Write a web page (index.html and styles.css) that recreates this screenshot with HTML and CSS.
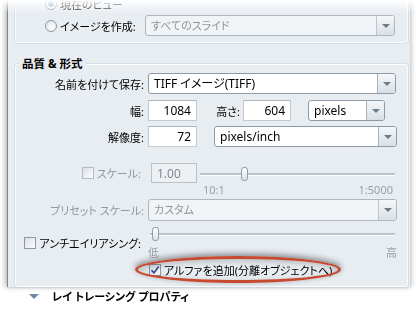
FILE: index.html
```html
<!DOCTYPE html>
<html lang="ja">

<head>
   <meta charset="UTF-8">
   <meta name="viewport" content="width=device-width, initial-scale=1.0">
   <link rel="stylesheet" href="styles.css">
   <title>品質 &amp; 形式</title>
</head>

<body>
   <div class="frame">
      <div class="panel">

         <!-- output group, its top is scrolled out of view -->
         <div class="group group-output">
            <div class="opt-row">
               <span class="radio radio-on"></span>
               <span class="opt-label">現在のビュー</span>
            </div>
            <div class="opt-row opt-row-create">
               <span class="radio"></span>
               <span class="opt-label">イメージを作成:</span>
               <div class="combo combo-off combo-slides">
                  <span class="combo-value">すべてのスライド</span>
                  <span class="drop"></span>
               </div>
            </div>
         </div>

         <div class="group group-quality">
            <div class="group-title">品質 &amp; 形式</div>

            <div class="row row-save">
               <label class="row-label">名前を付けて保存:</label>
               <div class="combo combo-save">
                  <span class="combo-value latin">TIFF イメージ(TIFF)</span>
                  <span class="drop"></span>
               </div>
            </div>

            <div class="row row-size">
               <label class="row-label">幅:</label>
               <div class="cell">
                  <span class="num num-w">1084</span>
                  <span class="inline-label">高さ:</span>
                  <span class="num num-h">604</span>
                  <div class="combo combo-unit">
                     <span class="combo-value latin">pixels</span>
                     <span class="drop"></span>
                  </div>
               </div>
            </div>

            <div class="row row-res">
               <label class="row-label">解像度:</label>
               <div class="cell">
                  <span class="num num-w">72</span>
                  <div class="combo combo-resunit">
                     <span class="combo-value latin">pixels/inch</span>
                     <span class="drop"></span>
                  </div>
               </div>
            </div>

            <div class="row row-scale">
               <div class="row-check is-off">
                  <span class="check"></span>
                  <span>スケール:</span>
               </div>
               <div class="cell">
                  <span class="num num-off">1.00</span>
                  <div class="slider slider-scale">
                     <span class="thumb"></span>
                  </div>
               </div>
            </div>
            <div class="row row-ticks">
               <span></span>
               <div class="ticks ticks-scale">
                  <span>10:1</span>
                  <span>1:5000</span>
               </div>
            </div>

            <div class="row row-preset">
               <label class="row-label is-off">プリセット スケール:</label>
               <div class="combo combo-off combo-preset">
                  <span class="combo-value">カスタム</span>
                  <span class="drop"></span>
               </div>
            </div>

            <div class="row row-aa">
               <div class="row-check">
                  <span class="check"></span>
                  <span>アンチエイリアシング:</span>
               </div>
               <div class="cell-stack">
                  <div class="slider slider-aa">
                     <span class="thumb"></span>
                  </div>
                  <div class="ticks ticks-aa">
                     <span>低</span>
                     <span>高</span>
                  </div>
               </div>
            </div>

            <div class="row row-alpha">
               <span></span>
               <div class="alpha">
                  <span class="check check-on">
                     <svg width="10" height="10" viewBox="0 0 10 10">
                        <path d="M1.5 5.2 L4 7.8 L8.8 1.6" fill="none" stroke="#2f3f9e" stroke-width="1.6"/>
                     </svg>
                  </span>
                  <span>アルファを追加(分離オブジェクトへ)</span>
                  <span class="highlight"></span>
               </div>
            </div>
         </div>

         <div class="section-head">
            <span class="twisty"></span>
            <span>レイ トレーシング プロパティ</span>
         </div>

      </div>
   </div>
</body>

</html>
```

FILE: styles.css
```css
* {
   padding: 0;
   margin: 0;
   box-sizing: border-box;
}

body {
   font-family: "Noto Sans", "Noto Sans CJK JP", sans-serif;
   font-size: 11px;
   font-feature-settings: "palt";
   color: #000;
   background-color: #fff;
}

.latin {
   font-size: 12px;
}

.frame {
   width: 418px;
   height: 317px;
   overflow: hidden;
   -webkit-mask-image: linear-gradient(to bottom, transparent 0, #000 13px, #000 303px, transparent 313px);
   mask-image: linear-gradient(to bottom, transparent 0, #000 13px, #000 303px, transparent 313px);
}

.panel {
   margin-left: 7px;
   width: 404px;
   height: 317px;
   background-color: #e8edf2;
   border-left: 1px solid #7d8790;
   border-right: 1px solid #d3d9de;
   box-shadow: -2px 0 5px rgba(0, 0, 0, 0.28), 2px 0 4px rgba(0, 0, 0, 0.1);
}

/* group boxes */
.group {
   position: relative;
   width: 393px;
   margin-left: 7px;
   border: 1px solid #fbfcfd;
   border-radius: 3px;
   box-shadow: 0 0 0 1px rgba(196, 205, 214, 0.45);
}

.group-output {
   margin-top: -30px;
   padding: 22px 0 6px;
}

.group-quality {
   margin-top: 21px;
   padding: 8px 0 10px;
}

.group-title {
   position: absolute;
   top: -9px;
   left: 3px;
   padding: 0 3px;
   font-size: 11.5px;
   font-weight: bold;
   line-height: 16px;
   background-color: #e8edf2;
}

.opt-row {
   display: flex;
   align-items: center;
   height: 21px;
}

.opt-row-create {
   margin-top: 1px;
}

.opt-row .radio {
   margin-left: 29px;
}

.opt-label {
   width: 85px;
   margin-left: 3px;
}

.radio {
   width: 12px;
   height: 12px;
   border: 1px solid #8f9aa5;
   border-radius: 50%;
   background: radial-gradient(circle at 60% 65%, #fff 0, #e3e8ed 70%, #cfd6dd 100%);
}

.radio-on {
   background: radial-gradient(circle, #6f93c9 0, #8fb0dc 2.5px, #fff 3.5px, #e3e8ed 100%);
}

/* combos */
.combo {
   display: flex;
   height: 21px;
   border: 1px solid #8e9aa6;
   border-radius: 3px;
   background-color: #fff;
   overflow: hidden;
}

.combo-value {
   flex: 1;
   padding-left: 5px;
   line-height: 19px;
   white-space: nowrap;
}

.drop {
   width: 18px;
   display: flex;
   align-items: center;
   justify-content: center;
   border-left: 1px solid #a9b3bd;
   background: linear-gradient(#f5f7f9, #d9e0e7);
}

.drop::after {
   content: '';
   border-left: 4px solid transparent;
   border-right: 4px solid transparent;
   border-top: 4px solid #6c7b8a;
}

.combo-off {
   border-color: #aeb7c0;
   background-color: #f1f4f6;
   color: #8d959d;
}

.combo-off .drop {
   border-left-color: #bcc4cc;
}

.combo-slides {
   width: 250px;
}

.combo-save {
   width: 248px;
}

.combo-unit {
   width: 77px;
   margin-left: 17px;
}

.combo-resunit {
   width: 183px;
   margin-left: 17px;
}

.combo-preset {
   width: 249px;
   height: 22px;
}

/* form rows */
.row {
   display: grid;
   grid-template-columns: 129px 1fr;
   column-gap: 3px;
   align-items: center;
}

.row-label {
   text-align: right;
   padding-right: 1px;
   white-space: nowrap;
}

.row-check {
   display: flex;
   align-items: center;
   justify-content: flex-end;
   gap: 3px;
   padding-right: 4px;
   white-space: nowrap;
}

.is-off {
   color: #9098a0;
}

.cell {
   display: flex;
   align-items: center;
}

.row-save {
   height: 21px;
}

.row-size {
   height: 21px;
   margin-top: 6px;
}

.row-res {
   height: 21px;
   margin-top: 5px;
}

.row-scale {
   height: 20px;
   margin-top: 16px;
}

.row-ticks {
   height: 13px;
}

.row-preset {
   height: 22px;
   margin-top: 3px;
}

.row-aa {
   margin-top: 6px;
}

.row-alpha {
   height: 14px;
   margin-top: 3px;
}

.num {
   height: 21px;
   padding-right: 5px;
   border: 1px solid #c3cad1;
   border-top-color: #adb6bf;
   background-color: #fff;
   text-align: right;
   font-size: 12px;
   line-height: 19px;
}

.num-w {
   width: 49px;
}

.num-h {
   width: 48px;
   margin-left: 3px;
}

.num-off {
   width: 46px;
   height: 20px;
   margin-left: 3px;
   padding-left: 5px;
   text-align: left;
   border-color: #b9c1c9;
   background-color: #eef1f4;
   color: #7f878f;
}

.inline-label {
   width: 29px;
   margin-left: 14px;
   text-align: right;
}

.check {
   position: relative;
   display: flex;
   align-items: center;
   justify-content: center;
   width: 12px;
   height: 12px;
   border: 1px solid #8e99a4;
   background: linear-gradient(135deg, #d9dfe5, #fdfdfe);
}

.is-off .check {
   border-color: #b3bbc3;
}

/* sliders */
.slider {
   position: relative;
   height: 14px;
}

.slider::before {
   content: '';
   position: absolute;
   left: 0;
   right: 0;
   top: 6px;
   height: 2px;
   background-color: #bcc4cc;
   border-bottom: 1px solid #fff;
}

.thumb {
   position: absolute;
   top: 0;
   width: 7px;
   height: 14px;
   border: 1px solid #939ea9;
   border-radius: 3px;
   background: linear-gradient(#fff, #dde3e9);
}

.slider-scale {
   width: 195px;
   margin-left: 3px;
   margin-top: 1px;
}

.slider-scale .thumb {
   left: 41px;
}

.slider-aa {
   width: 245px;
   margin-left: 2px;
}

.slider-aa .thumb {
   left: 2px;
}

.ticks {
   display: flex;
   justify-content: space-between;
   color: #9aa2aa;
   font-size: 11px;
   line-height: 13px;
}

.ticks-scale {
   width: 190px;
   margin-left: 55px;
}

.ticks-aa {
   width: 249px;
   margin-top: 5px;
}

.alpha {
   position: relative;
   display: flex;
   align-items: center;
   gap: 3px;
   padding-left: 1px;
   white-space: nowrap;
}

.highlight {
   position: absolute;
   left: -13px;
   top: -6px;
   width: 206px;
   height: 27px;
   border: 3px solid #c64a2f;
   border-radius: 50%;
   box-shadow: 0 -2px 6px rgba(0, 0, 0, 0.45), inset 0 2px 6px rgba(0, 0, 0, 0.22);
}

/* collapsed section */
.section-head {
   display: flex;
   align-items: center;
   height: 16px;
   margin-top: 1px;
   padding-left: 21px;
   font-weight: bold;
}

.twisty {
   width: 0;
   height: 0;
   margin-right: 13px;
   border-left: 5px solid transparent;
   border-right: 5px solid transparent;
   border-top: 5px solid #7186a0;
}
```
